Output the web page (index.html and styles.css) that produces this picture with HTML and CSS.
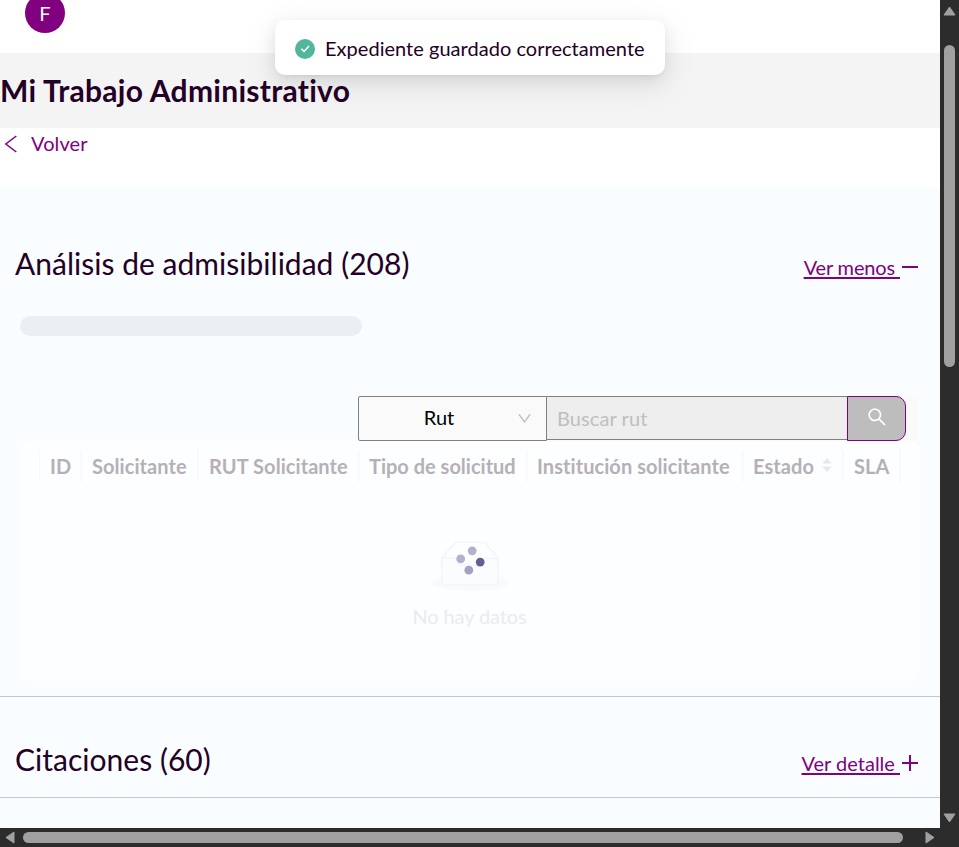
FILE: index.html
```html
<!DOCTYPE html>
<html lang="es">
<head>
<meta charset="utf-8">
<title>Mi Trabajo Administrativo</title>
<link rel="stylesheet" href="styles.css">
</head>
<body>
<div class="window">
  <main class="page">
    <header class="topbar"><div class="avatar">F</div></header>
    <div class="titlebar"><h1>Mi Trabajo Administrativo</h1></div>
    <nav class="back">
      <svg class="back-icon" viewBox="0 0 20 20"><path d="M16.3 2 5.8 10l10.5 8"/></svg>
      <a>Volver</a>
    </nav>
    <section class="panel first">
      <div class="panel-head">
        <h2>Análisis de admisibilidad (208)</h2>
        <div class="toggle"><a class="less">Ver menos&nbsp;</a><svg viewBox="0 0 20 20"><path d="M2 9h16v2H2z"/></svg></div>
      </div>
      <div class="skeleton"></div>
      <div class="search">
        <div class="select"><span>Rut</span><svg viewBox="0 0 1024 1024"><path d="M884 256h-75c-5.1 0-9.9 2.5-12.9 6.6L512 654.2 227.9 262.6c-3-4.1-7.8-6.6-12.9-6.6h-75c-6.5 0-10.3 7.4-6.5 12.7l352.6 486.1c12.8 17.6 39 17.6 51.7 0l352.6-486.1c3.9-5.3.1-12.7-6.4-12.7z"/></svg></div>
        <div class="input">Buscar rut</div>
        <div class="search-button"><svg viewBox="0 0 1024 1024"><path d="M909.6 854.5L649.9 594.8C690.2 542.7 712 479 712 412c0-80.2-31.3-155.4-87.9-212.1-56.6-56.7-132-87.9-212.1-87.9s-155.5 31.3-212.1 87.9C143.2 256.5 112 331.8 112 412c0 80.1 31.3 155.5 87.9 212.1C256.5 680.8 331.8 712 412 712c67 0 130.6-21.8 182.7-62l259.7 259.6a8.2 8.2 0 0011.6 0l43.6-43.5a8.2 8.2 0 000-11.6zM570.4 570.4C528 612.7 471.8 636 412 636s-116-23.3-158.4-65.6C211.3 528 188 471.8 188 412s23.3-116.1 65.6-158.4C296 211.3 352.2 188 412 188s116.1 23.2 158.4 65.6S636 352.2 636 412s-23.3 116.1-65.6 158.4z"/></svg></div>
      </div>
      <div class="card">
        <div class="columns">
          <div>ID</div><div>Solicitante</div><div>RUT Solicitante</div><div>Tipo de solicitud</div><div>Institución solicitante</div>
          <div>Estado<svg class="sorter" viewBox="0 0 10 16"><path d="M5 1 9.6 6.5H.4zM5 15 9.6 9.5H.4z"/></svg></div>
          <div>SLA</div>
        </div>
        <div class="empty">
          <div class="empty-art">
            <svg class="box" viewBox="0 0 64 41"><g transform="translate(0 1)" fill="none"><ellipse fill="#f9fafc" cx="32" cy="33" rx="32" ry="7"/><g stroke="#f2f3f5"><path d="M55 12.76L44.854 1.258C44.367.474 43.656 0 42.907 0H21.093c-.749 0-1.46.474-1.947 1.257L9 12.761V22h46v-9.24z"/><path fill="#fbfcfd" d="M41.613 15.931c0-1.605.994-2.93 2.227-2.931H55v18.137C55 33.26 53.68 35 52.05 35h-40.1C10.32 35 9 33.259 9 31.137V13h11.16c1.233 0 2.227 1.323 2.227 2.928v.022c0 1.605 1.005 2.901 2.237 2.901h14.752c1.232 0 2.237-1.308 2.237-2.913v-.007z"/></g></g></svg>
            <svg class="spinner" viewBox="0 0 32 32"><circle cx="17.2" cy="5.8" r="4.4" fill="#b1b1ce"/><circle cx="5.7" cy="13.8" r="4.4" fill="#b1b1ce"/><circle cx="25.2" cy="17.1" r="4.4" fill="#5f6093"/><circle cx="13.8" cy="25.2" r="4.4" fill="#a0a1c3"/></svg>
          </div>
          <p>No hay datos</p>
        </div>
      </div>
    </section>
    <section class="panel second">
      <div class="panel-head">
        <h2>Citaciones (60)</h2>
        <div class="toggle"><a>Ver detalle&nbsp;</a><svg viewBox="0 0 20 20"><path d="M2 9h7V2h2v7h7v2h-7v7H9v-7H2z"/></svg></div>
      </div>
    </section>
    <div class="rest"></div>
  </main>
  <div class="vbar">
    <svg viewBox="0 0 13 10"><path d="M6.5 1 12 9H1z"/></svg>
    <div class="vthumb"></div>
    <svg viewBox="0 0 13 10"><path d="M6.5 9 12 1H1z"/></svg>
  </div>
  <div class="hbar">
    <svg viewBox="0 0 10 13"><path d="M1 6.5 9 1v11z"/></svg>
    <div class="hthumb"></div>
    <svg viewBox="0 0 10 13"><path d="M9 6.5 1 1v11z"/></svg>
  </div>
</div>
<div class="toast">
  <svg viewBox="0 0 20 20"><circle cx="10" cy="10" r="10" fill="#52b69a"/><path d="M6.4 9.8 9 12.4 14 6.9" fill="none" stroke="#fff" stroke-width="1.5"/></svg>
  <span>Expediente guardado correctamente</span>
</div>
</body>
</html>
```
FILE: styles.css
```css
* { box-sizing: border-box; }
body { margin: 0; font: 20px/30px Lato, sans-serif; color: #240026; overflow: hidden; }
h1, h2, p { margin: 0; }
svg { display: block; flex: none; }
.window { display: grid; grid-template: 828px 19px / 940px 19px; width: 959px; height: 847px; }
.page { grid-area: 1 / 1; overflow: hidden; background: #fff; }
.topbar { height: 53px; padding-left: 25px; overflow: hidden; }
.avatar { width: 40px; height: 40px; margin-top: -7px; border-radius: 50%; background: purple; color: #fff; text-align: center; line-height: 40px; }
.titlebar { height: 75px; background: #f4f4f4; }
h1 { font-size: 30px; line-height: 74px; font-weight: 700; letter-spacing: .28px; white-space: nowrap; }
.back { display: flex; height: 60px; color: purple; letter-spacing: .1px; }
.back-icon { width: 20px; height: 20px; margin: 6px 11px 0 0; fill: none; stroke: purple; stroke-width: 1.5; }
.panel { background: #f9fdff; border-bottom: 1px solid #c6c9cc; }
.first { height: 509px; padding-top: 52px; }
.second { height: 101px; padding-top: 39px; }
.panel-head { display: flex; justify-content: space-between; padding: 0 20px 0 15px; height: 48px; }
h2 { font-size: 30px; line-height: 46px; font-weight: 400; letter-spacing: .02px; white-space: nowrap; }
.toggle { display: flex; padding-top: 12px; color: purple; }
.toggle a { text-decoration: underline; text-decoration-thickness: 2px; text-underline-offset: 2px; }
.toggle .less { letter-spacing: -.15px; }
.toggle svg { width: 20px; height: 20px; margin-top: 5px; fill: purple; }
.skeleton { width: 342px; height: 20px; margin: 28px 0 0 20px; border-radius: 10px; background: #ebeff2; }
.search { display: flex; width: 560px; height: 45px; margin: 60px 0 0 358px; background: #fafafa; }
.select { display: flex; align-items: center; width: 189px; border: 1px solid #808080; border-radius: 2px 0 0 2px; padding-right: 13px; background: #fafafa; color: #000; }
.select span { flex: 1; padding: 0 0 3px 3px; text-align: center; }
.select svg { width: 17px; height: 17px; fill: #bfbfbf; }
.input { width: 300px; height: 44px; border: solid #808080; border-width: 1px 0; padding-left: 10px; background: #eee; color: #bfbfbf; line-height: 42px; letter-spacing: .08px; }
.search-button { width: 59px; border: 1px solid purple; border-radius: 0 10px 10px 0; background: #bdbdbd; padding: 9px 0 0 18px; }
.search-button svg { width: 22px; height: 22px; fill: #fff; }
.card { width: 900px; height: 240px; margin-left: 20px; padding: 9px 20px 0 19px; border-radius: 10px; background: #fdfeff; }
.columns { display: grid; grid-template-columns: 42px 117px 161px 168px 216px 100px 57px; height: 32px; border-left: 1px solid #f7f9fb; color: #b5b0b8; font-weight: 700; line-height: 30px; letter-spacing: .06px; }
.columns div { display: flex; align-items: center; padding: 0 0 0 10px; border-right: 2px solid #f7f9fb; white-space: nowrap; }
.columns div:nth-child(4), .columns div:nth-child(5), .columns div:nth-child(6) { padding-left: 9px; }
.columns div:nth-child(4) { letter-spacing: 0; }
.sorter { width: 10px; height: 16px; margin: -3px 0 0 8px; fill: #e7e8eb; }
.empty { margin-top: 59px; text-align: center; color: #eaebee; letter-spacing: -.1px; }
.empty-art { position: relative; width: 78px; height: 50px; margin: 0 auto; }
.box { width: 78px; height: 50px; }
.spinner { position: absolute; left: 24px; top: 4px; width: 32px; height: 32px; }
.empty p { margin-top: 10px; }
.rest { height: 40px; background: #f9fdff; }
.vbar, .hbar { display: flex; align-items: center; background: #2c2c2c; fill: #a0a0a0; stroke: #a0a0a0; stroke-linejoin: round; }
.vbar { grid-area: 1 / 2; flex-direction: column; justify-content: space-between; padding: 6px 0 5px; }
.vbar svg { width: 13px; height: 10px; }
.vthumb { width: 11px; height: 322px; margin: 29px 0 auto; border-radius: 6px; background: #a0a0a0; }
.hbar { grid-area: 2 / 1 / 3 / 3; padding: 0 24px 0 5px; }
.hbar svg { width: 10px; height: 13px; }
.hthumb { width: 880px; height: 11px; margin: 0 auto 0 8px; border-radius: 6px; background: #a0a0a0; }
.toast { position: absolute; left: 275px; top: 20px; display: flex; align-items: center; gap: 10px; width: 390px; height: 55px; padding: 0 20px; border-radius: 10px; background: #fff; box-shadow: 0 6px 16px rgba(0,0,0,.08), 0 3px 6px -4px rgba(0,0,0,.12), 0 9px 28px 8px rgba(0,0,0,.05); white-space: nowrap; }
.toast svg { width: 20px; height: 20px; margin-top: 3px; }
.toast span { padding-top: 1px; letter-spacing: .03px; }
```
